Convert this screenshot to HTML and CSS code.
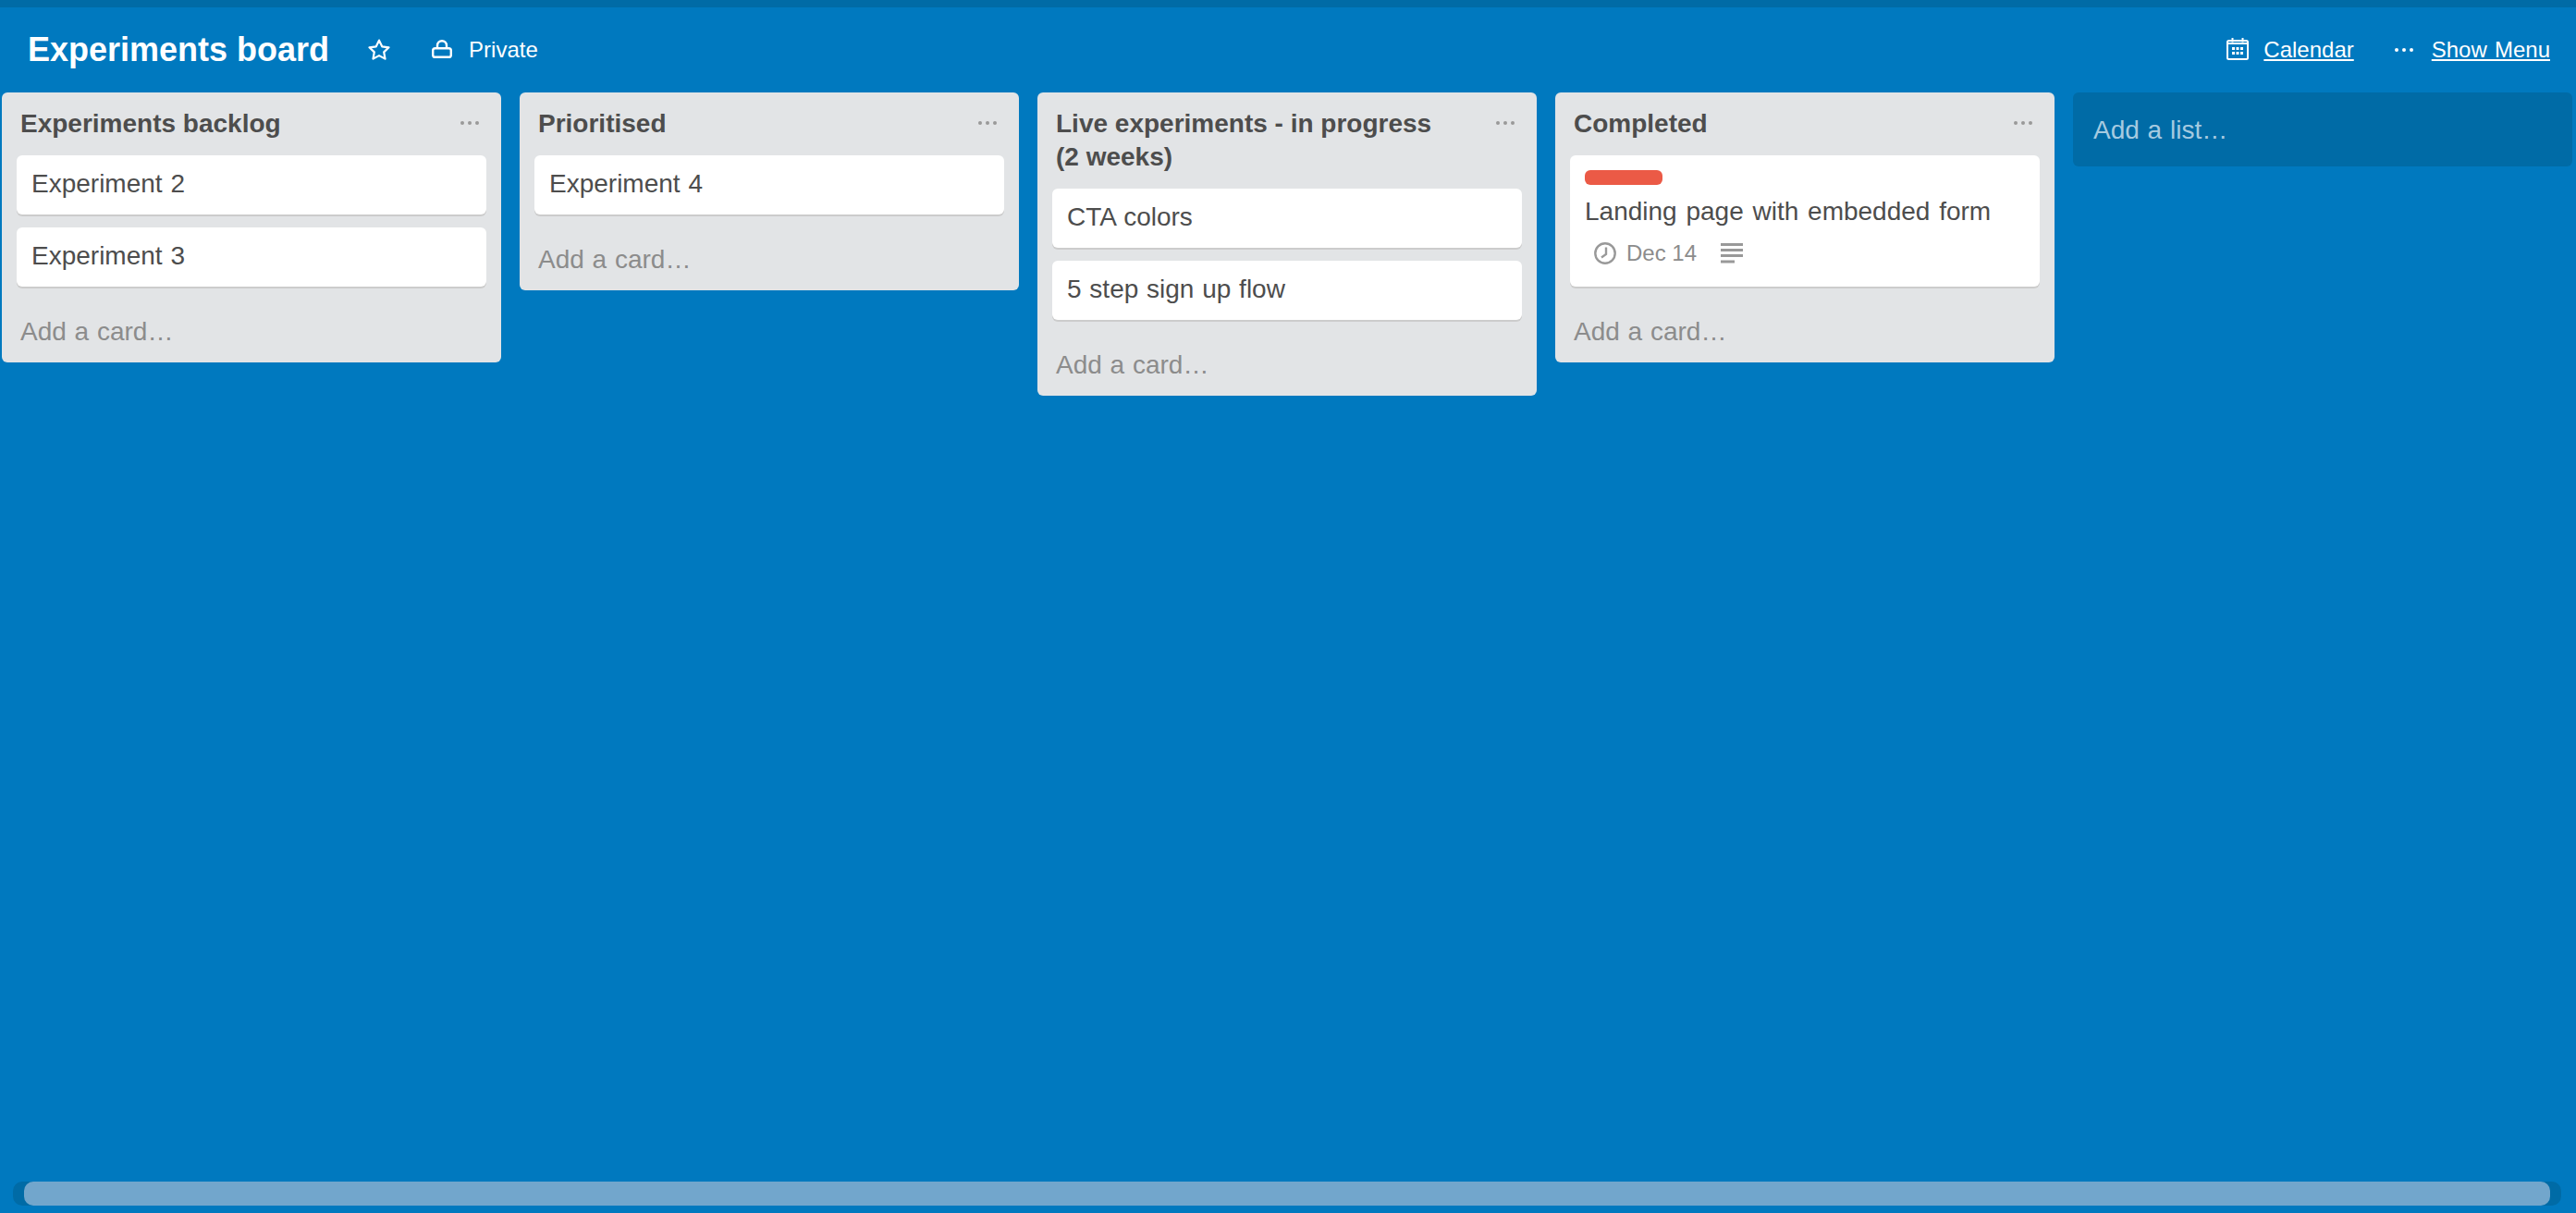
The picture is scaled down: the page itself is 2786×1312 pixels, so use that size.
FILE: index.html
```html
<!DOCTYPE html>
<html lang="en">
<head>
<meta charset="utf-8">
<title>Experiments board</title>
<link rel="stylesheet" href="styles.css">
</head>
<body>
<div class="topbar"></div>
<header class="board-header">
  <h1 class="board-title">Experiments board</h1>
  <svg class="icon icon-star" viewBox="0 0 24 23" width="24" height="23"><path d="M12 1.600l3.200 6.700 7.300 1-5.300 5.100 1.300 7.200-6.500-3.500-6.500 3.500 1.300-7.200-5.300-5.100 7.300-1z" fill="none" stroke="#fff" stroke-width="2.200" stroke-linejoin="round"/></svg>
  <svg class="icon icon-lock" viewBox="0 0 22 20" width="22" height="20"><path d="M6 9V6.200a5 5 0 0 1 10 0V9" fill="none" stroke="#fff" stroke-width="2.400"/><rect x="1.200" y="9.200" width="19.600" height="9.600" rx="2.400" fill="none" stroke="#fff" stroke-width="2.400"/></svg>
  <span class="header-label">Private</span>
  <div class="header-right">
    <svg class="icon icon-cal" viewBox="0 0 24 24" width="24" height="24"><rect x="1" y="3" width="22" height="20" rx="1.500" fill="none" stroke="#fff" stroke-width="2"/><path d="M1 6h22" stroke="#fff" stroke-width="2"/><path d="M6.500 0v4.500M17.500 0v4.500" stroke="#fff" stroke-width="2"/><g fill="#fff"><rect x="6" y="10" width="3" height="3"/><rect x="10.500" y="10" width="3" height="3"/><rect x="15" y="10" width="3" height="3"/><rect x="6" y="15" width="3" height="3"/><rect x="10.500" y="15" width="3" height="3"/><rect x="15" y="15" width="3" height="3"/></g></svg>
    <a class="header-link link-cal" href="#">Calendar</a>
    <svg class="icon icon-dots" viewBox="0 0 20 4" width="20" height="4"><g fill="#fff"><circle cx="2" cy="2" r="2"/><circle cx="10" cy="2" r="2"/><circle cx="18" cy="2" r="2"/></g></svg>
    <a class="header-link link-menu" href="#">Show Menu</a>
  </div>
</header>
<main class="board">
  <section class="list">
    <div class="list-head"><h2 class="list-title">Experiments backlog</h2><svg class="list-menu" viewBox="0 0 20 4" width="20" height="4"><g fill="#999"><circle cx="2" cy="2" r="2"/><circle cx="10" cy="2" r="2"/><circle cx="18" cy="2" r="2"/></g></svg></div>
    <div class="card">Experiment 2</div>
    <div class="card">Experiment 3</div>
    <div class="add-card">Add a card…</div>
  </section>
  <section class="list">
    <div class="list-head"><h2 class="list-title">Prioritised</h2><svg class="list-menu" viewBox="0 0 20 4" width="20" height="4"><g fill="#999"><circle cx="2" cy="2" r="2"/><circle cx="10" cy="2" r="2"/><circle cx="18" cy="2" r="2"/></g></svg></div>
    <div class="card">Experiment 4</div>
    <div class="add-card">Add a card…</div>
  </section>
  <section class="list">
    <div class="list-head"><h2 class="list-title">Live experiments - in progress (2 weeks)</h2><svg class="list-menu" viewBox="0 0 20 4" width="20" height="4"><g fill="#999"><circle cx="2" cy="2" r="2"/><circle cx="10" cy="2" r="2"/><circle cx="18" cy="2" r="2"/></g></svg></div>
    <div class="card">CTA colors</div>
    <div class="card">5 step sign up flow</div>
    <div class="add-card">Add a card…</div>
  </section>
  <section class="list">
    <div class="list-head"><h2 class="list-title">Completed</h2><svg class="list-menu" viewBox="0 0 20 4" width="20" height="4"><g fill="#999"><circle cx="2" cy="2" r="2"/><circle cx="10" cy="2" r="2"/><circle cx="18" cy="2" r="2"/></g></svg></div>
    <div class="card card-rich">
      <div class="label"></div>
      <div class="card-title">Landing page with embedded form</div>
      <div class="meta">
        <svg class="icon-clock" viewBox="0 0 24 24" width="24" height="24"><circle cx="12" cy="12" r="10.700" fill="none" stroke="#999" stroke-width="2.400"/><path d="M13 5.500v7.500l-5 3.500" fill="none" stroke="#999" stroke-width="2.400"/></svg>
        <span class="due">Dec 14</span>
        <svg class="icon-desc" viewBox="0 0 24 22" width="24" height="22"><g fill="#999"><rect y="0" width="24" height="3"/><rect y="6" width="24" height="3"/><rect y="12" width="24" height="3"/><rect y="18.500" width="15" height="3"/></g></svg>
      </div>
    </div>
    <div class="add-card">Add a card…</div>
  </section>
  <div class="add-list">Add a list…</div>
</main>
<div class="scroll-track"><div class="scroll-thumb"></div></div>
</body>
</html>
```

FILE: styles.css
```css
* { box-sizing: border-box; }
html, body { margin: 0; height: 100%; }
body {
  background: #0079bf;
  font-family: "Liberation Sans", Arial, sans-serif;
  color: #4d4d4d;
  overflow: hidden;
  position: relative;
}
.topbar { height: 8px; background: #006ba6; }
.board-header {
  height: 92px;
  display: flex;
  align-items: center;
  padding: 0 28px 0 30px;
  color: #fff;
}
.board-title {
  margin: 0;
  font-size: 36px;
  line-height: 48px;
  font-weight: 700;
  color: #fff;
}
.icon { display: block; flex: none; }
.icon-star { margin-left: 42px; margin-top: -2px; }
.icon-lock { margin-left: 45px; margin-top: -2px; }
.header-label { margin-left: 18px; font-size: 24px; line-height: 32px; }
.header-right { margin-left: auto; display: flex; align-items: center; }
.header-link { color: #fff; font-size: 24px; line-height: 32px; text-decoration: underline; margin-left: 16px; }
.link-cal { margin-right: 44px; }
.link-menu { word-spacing: 1.500px; }
.icon-cal { margin-top: -2px; }
.icon-dots + .header-link { margin-left: 20px; }
.board {
  display: flex;
  align-items: flex-start;
  gap: 20px;
  padding: 0 2px;
}
.list {
  width: 540px;
  flex: none;
  background: #e2e4e6;
  border-radius: 6px;
  padding: 16px 16px 0;
}
.list-head {
  display: flex;
  align-items: flex-start;
  justify-content: space-between;
  padding: 0 8px 0 4px;
  margin-bottom: 16px;
}
.list-title {
  margin: 0;
  width: 425px;
  font-size: 28px;
  line-height: 36px;
  font-weight: 700;
  color: #4d4d4d;
}
.list-menu { flex: none; margin-top: 15px; }
.card {
  background: #fff;
  border-radius: 6px;
  box-shadow: 0 2px 0 #ccc;
  padding: 13px 16px 15px;
  margin-bottom: 14px;
  font-size: 28px;
  line-height: 36px;
  color: #4d4d4d;
  word-spacing: 1px;
}
.card-rich { padding: 16px 16px 12px; }
.card-title { word-spacing: 2px; }
.label { width: 84px; height: 16px; border-radius: 6px; background: #eb5a46; margin-bottom: 11px; }
.meta { display: flex; align-items: center; height: 48px; margin-top: 3px; padding-left: 10px; color: #8c8c8c; word-spacing: 0; }
.due { margin-left: 11px; font-size: 24px; line-height: 32px; }
.icon-desc { margin-left: 26px; }
.add-card {
  padding: 17px 4px 15px;
  font-size: 28px;
  line-height: 36px;
  color: #8c8c8c;
  word-spacing: 1px;
}
.add-list {
  width: 540px;
  flex: none;
  height: 80px;
  background: #006ba6;
  border-radius: 6px;
  padding: 23px 22px 21px;
  font-size: 28px;
  line-height: 36px;
  color: #a6cae0;
  word-spacing: 1px;
}
.scroll-track {
  position: absolute;
  left: 14px;
  right: 16px;
  bottom: 8px;
  height: 26px;
  border-radius: 10px;
  background: #006ba6;
  padding: 0 12px;
}
.scroll-thumb { height: 100%; border-radius: 10px; background: #72a6cc; }
```
